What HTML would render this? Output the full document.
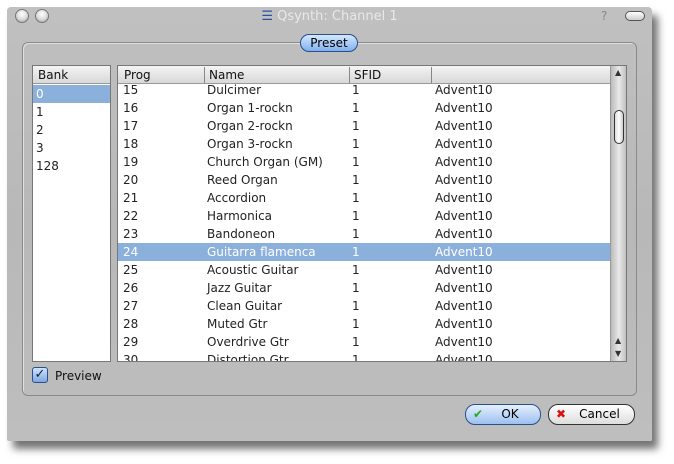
<!DOCTYPE html><html><head><style>
*{box-sizing:border-box;margin:0;padding:0}
body{width:674px;height:464px;background:#fff;font-family:"DejaVu Sans","Liberation Sans",sans-serif;font-size:12px;position:relative;overflow:hidden}
.win{position:absolute;left:7px;top:7px;width:645px;height:434px;background:linear-gradient(180deg,#c0c0c0,#b8b8b8 50%,#bebebe);border-radius:4px 4px 2px 2px;box-shadow:6px 8px 8px rgba(0,0,0,.55)}
.abs{position:absolute}
.circ{position:absolute;top:2px;width:14px;height:14px;border-radius:50%;border:1px solid #777;background:radial-gradient(circle at 50% 35%,#fff,#ddd 50%,#999)}
.title{position:absolute;left:0;right:0;top:2px;text-align:center;color:#e8e8e8;font-size:13px}
.group{position:absolute;left:15px;top:35px;width:615px;height:354px;border:1px solid #8a8a8a;border-radius:6px;box-shadow:inset 1px 1px 0 #e0e0e0}
.pill{position:absolute;border-radius:10px;border:1px solid #333;text-align:center}
.list{position:absolute;background:#fff;border:1px solid #777;overflow:hidden}
.hdr{position:absolute;top:0;left:0;right:0;height:18px;background:linear-gradient(#f4f4f4,#d8d8d8);border-bottom:1px solid #999}
.hdr span{position:absolute;top:2px;color:#111}
.sep{position:absolute;top:1px;width:1px;height:16px;background:#888}
.row{position:absolute;left:0;right:0;height:18px;color:#222;line-height:18px}
.row span{position:absolute}
.sel{background:#8cb0dc;color:#fff}
</style></head><body>
<div class="win">
<div class="circ" style="left:8px"></div><div class="circ" style="left:28px"></div>
<div class="title"><span style="color:#2a4fa0;font-weight:bold">☰</span> Qsynth: Channel 1</div>
<div class="abs" style="left:594px;top:2px;color:#888">?</div>
<div class="abs" style="left:618px;top:4px;width:20px;height:10px;border-radius:5px;border:1px solid #555;background:linear-gradient(#fff,#ccc)"></div>
<div class="group"></div>
<div class="pill" style="left:293px;top:27px;width:58px;height:18px;background:linear-gradient(#d6e8ff,#7fb0ee);line-height:16px;border-color:#2a4f8a">Preset</div>
<div class="list" style="left:25px;top:58px;width:79px;height:297px">
<div class="hdr"><span style="left:5px">Bank</span></div>
<div class="row sel" style="top:19px"><span style="left:3px">0</span></div>
<div class="row" style="top:37px"><span style="left:3px">1</span></div>
<div class="row" style="top:55px"><span style="left:3px">2</span></div>
<div class="row" style="top:73px"><span style="left:3px">3</span></div>
<div class="row" style="top:91px"><span style="left:3px">128</span></div>
</div>
<div class="list" style="left:110px;top:58px;width:510px;height:297px">
<div class="abs" style="left:0;top:0;width:492px;height:297px;overflow:hidden">
<div class="abs" style="left:0;top:16px;width:492px;height:281px;overflow:hidden">
<div id="rows"></div>
</div>
<div class="hdr"><span style="left:6px">Prog</span><div class="sep" style="left:86px"></div><span style="left:91px">Name</span><div class="sep" style="left:231px"></div><span style="left:236px">SFID</span><div class="sep" style="left:313px"></div></div>
</div>
<div class="abs" style="left:492px;top:0;width:17px;height:297px;background:linear-gradient(90deg,#bbb,#e8e8e8,#bbb);border-left:1px solid #999">
<div class="abs" style="left:4px;top:2px;font-size:8px;color:#333">▲</div>
<div class="abs" style="left:3px;top:44px;width:10px;height:34px;border:1px solid #333;border-radius:5px;background:linear-gradient(90deg,#ddd,#fff,#ccc)"></div>
<div class="abs" style="left:4px;top:270px;font-size:8px;color:#333">▲</div>
<div class="abs" style="left:4px;top:283px;font-size:8px;color:#333">▼</div>
</div>
</div>
<div class="abs" style="left:25px;top:360px;width:16px;height:16px;border:1px solid #2a4f8a;border-radius:3px;background:linear-gradient(#cfe2ff,#7fa8e0);color:#123;font-size:13px;line-height:14px;text-align:center">✓</div>
<div class="abs" style="left:48px;top:362px;color:#111">Preview</div>
<div class="pill" style="left:458px;top:397px;width:76px;height:21px;background:linear-gradient(#e6f0ff,#9cc0f0);border-color:#2a4f8a;line-height:19px"><span style="position:absolute;left:7px;color:#2a2;font-weight:bold">✔</span><span style="margin-left:14px">OK</span></div>
<div class="pill" style="left:541px;top:397px;width:87px;height:21px;background:linear-gradient(#fff,#ddd);line-height:19px"><span style="position:absolute;left:7px;color:#d11;font-weight:bold">✖</span><span style="margin-left:16px">Cancel</span></div>
</div>
<script>
var d=[[15,"Dulcimer"],[16,"Organ 1-rockn"],[17,"Organ 2-rockn"],[18,"Organ 3-rockn"],[19,"Church Organ (GM)"],[20,"Reed Organ"],[21,"Accordion"],[22,"Harmonica"],[23,"Bandoneon"],[24,"Guitarra flamenca"],[25,"Acoustic Guitar"],[26,"Jazz Guitar"],[27,"Clean Guitar"],[28,"Muted Gtr"],[29,"Overdrive Gtr"],[30,"Distortion Gtr"]];
var h="";d.forEach(function(r,i){h+='<div class="row'+(r[0]==24?' sel':'')+'" style="top:'+(i*18-1)+'px"><span style="left:5px">'+r[0]+'</span><span style="left:89px">'+r[1]+'</span><span style="left:234px">1</span><span style="left:317px">Advent10</span></div>';});
document.getElementById("rows").innerHTML=h;
</script>
</body></html>
